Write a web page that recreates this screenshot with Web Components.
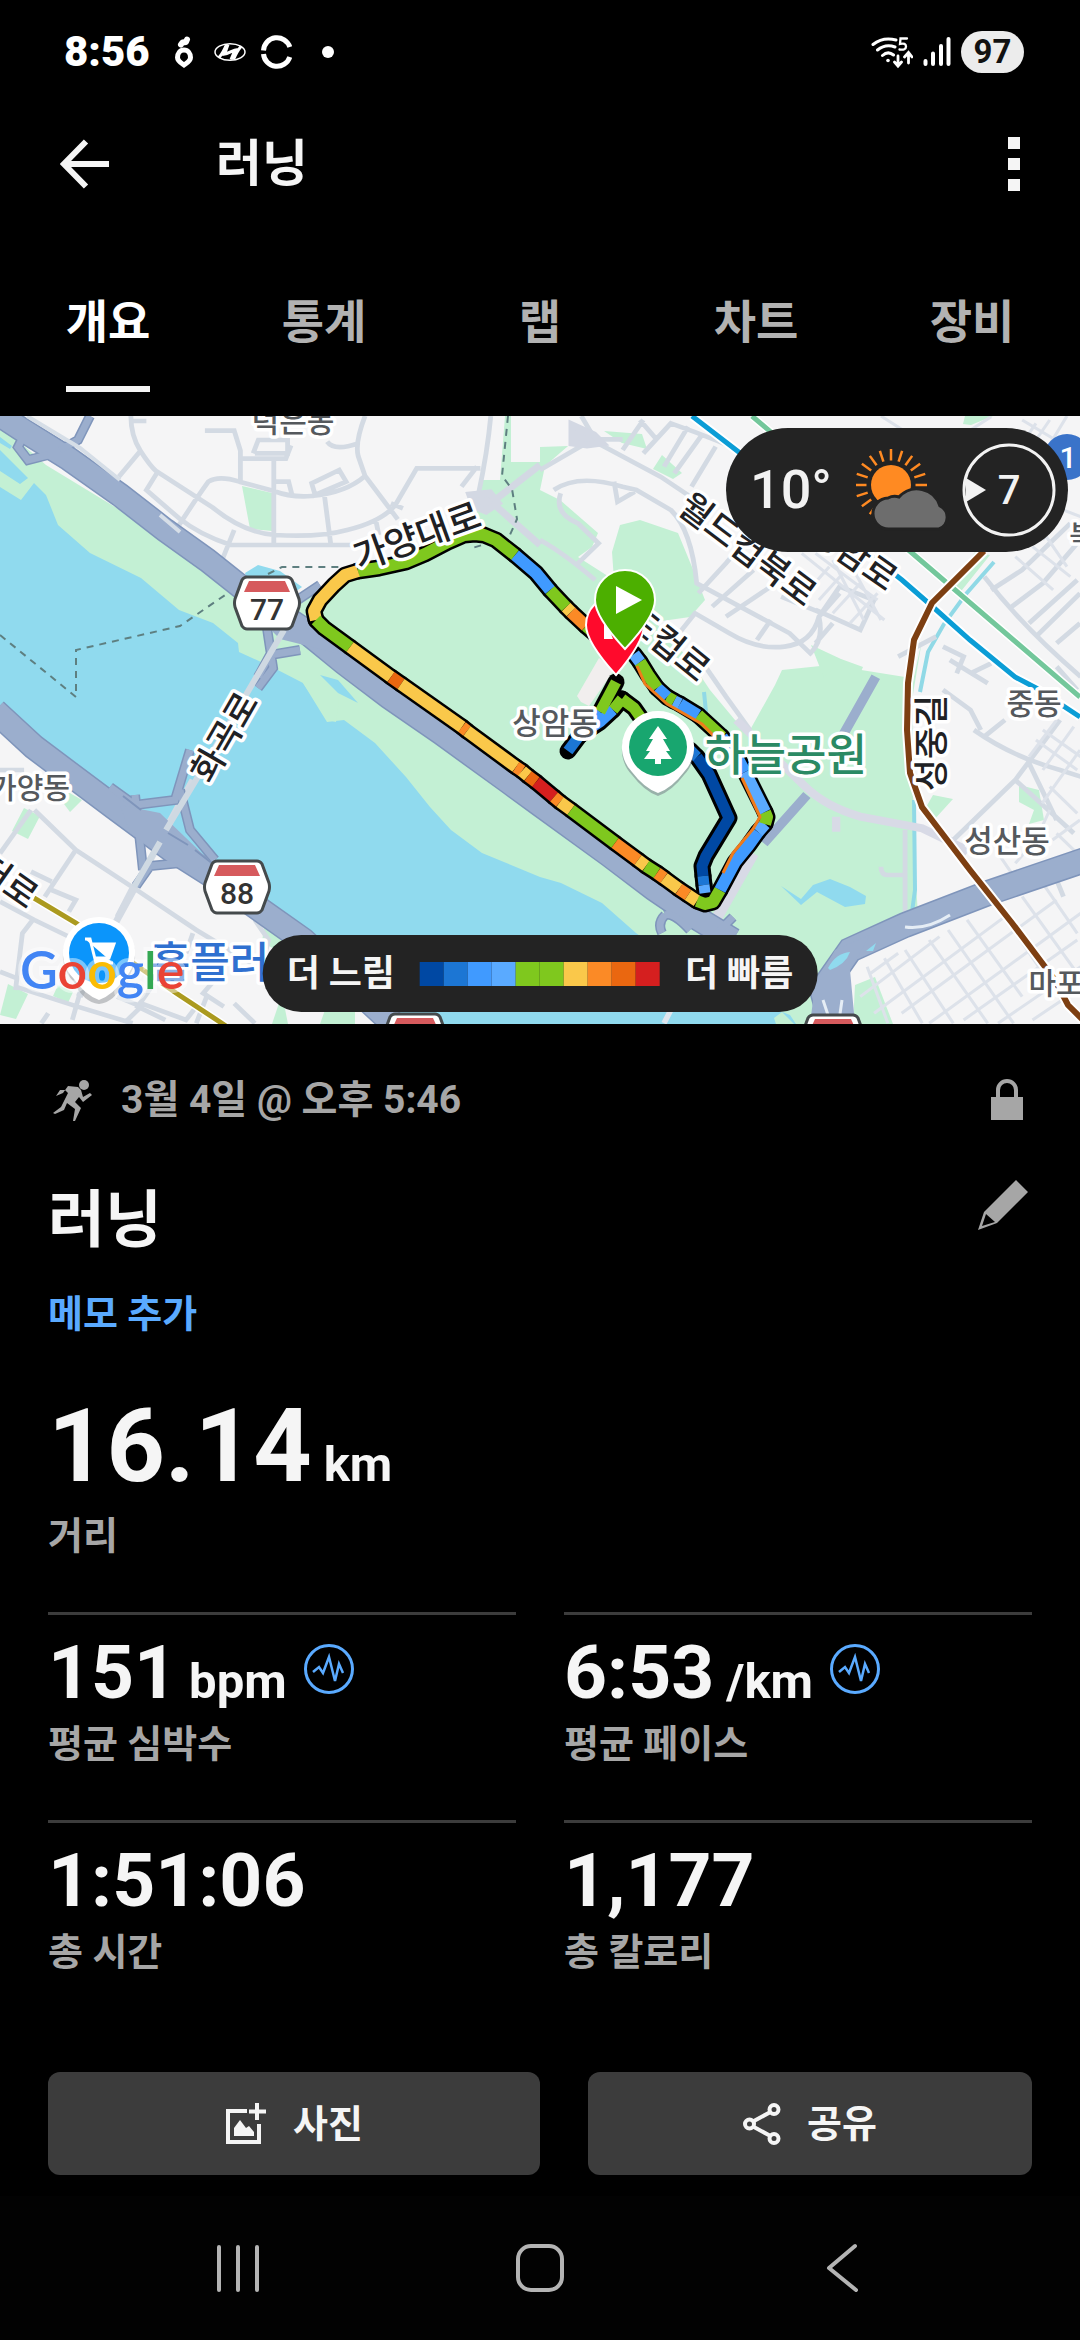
<!DOCTYPE html>
<html lang="ko">
<head>
<meta charset="utf-8">
<meta name="viewport" content="width=device-width, initial-scale=1">
<title>러닝</title>
<style>
  html { background: #000; }
  body {
    margin: 0; min-height: 100vh; display: flex; flex-direction: column;
    background: #000; color: #f5f5f5;
    font-family: Roboto, "Noto Sans CJK KR", sans-serif; font-weight: 700;
  }
</style>
</head>
<body>
<status-bar time="8:56" battery="97"></status-bar>
<app-header>러닝</app-header>
<tab-bar>
  <tab-item selected>개요</tab-item>
  <tab-item>통계</tab-item>
  <tab-item>랩</tab-item>
  <tab-item>차트</tab-item>
  <tab-item>장비</tab-item>
</tab-bar>
<route-map>
  <weather-pill temp="10°" wind="7"></weather-pill>
  <pace-legend slow="더 느림" fast="더 빠름"></pace-legend>
</route-map>
<activity-summary>
  <span slot="date">3월 4일 @ 오후 5:46</span>
  <span slot="title">러닝</span>
  <span slot="memo">메모 추가</span>
  <stat-cell large value="16.14" unit="km">거리</stat-cell>
  <stat-cell value="151" unit="bpm" zone>평균 심박수</stat-cell>
  <stat-cell value="6:53" unit="/km" zone>평균 페이스</stat-cell>
  <stat-cell value="1:51:06">총 시간</stat-cell>
  <stat-cell value="1,177">총 칼로리</stat-cell>
</activity-summary>
<action-row>
  <action-button icon="photo">사진</action-button>
  <action-button icon="share">공유</action-button>
</action-row>
<nav-bar></nav-bar>

<script>
const define = (name, render) => customElements.define(name, class extends HTMLElement {
  constructor() { super(); this.attachShadow({ mode: 'open' }); }
  connectedCallback() { this.shadowRoot.innerHTML = render(this); }
});
const reset = `:host,*{box-sizing:border-box} svg{display:block;flex:none} button{font:inherit;color:inherit;background:none;border:0;padding:0;margin:0;display:flex;align-items:center;justify-content:center;cursor:pointer}`;

define('status-bar', el => `
<style>${reset}
:host{display:flex;align-items:center;justify-content:space-between;height:104px;padding:0 56px 0 64px;color:#fff}
.side{display:flex;align-items:center}
.time{font-size:42px;font-weight:900;line-height:48px}
.left{gap:15px}.right{gap:10px}
.batt{width:63px;height:42px;border-radius:21px;background:#ececec;color:#111;font:700 33px/42px Roboto,sans-serif;text-align:center}
</style>
<div class="side left"><span class="time">${el.getAttribute('time')}</span>
<svg width="34" height="32" viewBox="-8 0 34 32" fill="none" stroke="#fff"><path d="M11 14c-4 0-6.500 3.500-6.500 7.500 0 3.500 3.500 5.500 6.500 7.500 3-2 6.500-4 6.500-7.500 0-4-2.500-7.500-6.500-7.500z" stroke-width="5"/><path d="M8 8.500l1.500-2 3.500-.5 1-2.500" stroke-width="6" stroke-linecap="round" stroke-linejoin="round"/></svg>
<svg width="32" height="20" viewBox="0 0 32 20" fill="none" stroke="#fff"><ellipse cx="16" cy="10" rx="15" ry="8.300" stroke-width="1.500"/><path d="M12.500 2.500Q9 11 5 15.500M19.500 17.500Q23 9 27 4.500M8.500 12.500C15 12.500 18 7.500 24 7.500M14 2.500L11 11M21 8l-4 9.500" stroke-width="3"/></svg>
<svg width="32" height="34" viewBox="0 0 32 34" fill="none" stroke="#fff" stroke-width="5"><path d="M2.500 15.500A13.500 13.500 0 0 1 28.800 12M2.500 19A13.500 13.500 0 0 0 28.800 22"/></svg>
<svg width="32" height="12" viewBox="0 0 32 12"><circle cx="20" cy="6" r="6" fill="#fff"/></svg></div>
<div class="side right">
<svg width="42" height="34" viewBox="0 0 42 34" fill="none" stroke="#fff" stroke-width="3" stroke-linecap="round"><path d="M2 9.500Q12 1.500 25 5M6.500 15Q14.500 8.500 24 12M11.500 20.500Q17 15.500 22.500 20"/><circle cx="17" cy="25.500" r="1.800" fill="#fff" stroke="none"/><path d="M36 3.500h-6.500l-.500 5.500q6-1.500 6 2.500t-6.500 3" stroke-width="2.300"/><path d="M27 21v9M23.500 27l3.500 4 3.500-4M37.500 28v-9M33.500 22l4-4.500 3.500 4.500" stroke-width="2.800"/></svg>
<svg width="28" height="32" viewBox="0 0 28 32" stroke="#fff" stroke-width="4" stroke-linecap="round"><path d="M2.500 25v3M10 17.500V28M18 10v18M25.500 3v25"/></svg>
<span class="batt">${el.getAttribute('battery')}</span></div>`);

define('app-header', () => `
<style>${reset}
:host{display:flex;align-items:center;height:120px;padding:0 54px 0 60px}
h1{flex:1;margin:0 0 0 106px;font-size:50px;line-height:64px}
</style>
<button aria-label="뒤로"><svg width="50" height="50" viewBox="0 0 50 50" fill="none" stroke="#f5f5f5" stroke-width="6"><path d="M49 25H5M26 2.500L4 25l22 22.500"/></svg></button>
<h1><slot></slot></h1>
<button aria-label="더보기"><svg width="24" height="54" viewBox="0 0 24 54" fill="#f5f5f5"><path d="M6 0h12v12H6zM6 21h12v12H6zM6 42h12v12H6z"/></svg></button>`);

define('tab-bar', () => `<style>:host{display:flex;height:192px}</style><slot></slot>`);
define('tab-item', el => `
<style>${reset}
:host{flex:1;display:flex;justify-content:center;align-items:flex-end;padding-bottom:24px;color:#b2b2b2}
:host([selected]){color:#fff}
button{font-size:46px;line-height:64px;padding:0 0 32px;border-bottom:6px solid transparent}
:host([selected]) button{border-color:#f5f5f5}
</style><button role="tab" aria-selected="${el.hasAttribute('selected')}"><slot></slot></button>`);

const shield = (x, y, n) => `<g transform="translate(${x} ${y})"><path d="M-20-26H20Q23-26 25-23L32-4Q33 0 32 4L25 23Q23 26 20 26H-20Q-23 26-25 23L-32 4Q-33 0-32-4L-25-23Q-23-26-20-26z" fill="#fff" stroke="#454a4c" stroke-width="3"/><path d="M-18-22H18L23-11H-23z" fill="#d65a5d"/>${n ? `<text y="17" text-anchor="middle" font-size="30" font-weight="500" fill="#333">${n}</text>` : ''}</g>`;
const label = (x, y, size, text, rot = 0, cls = 'road') => `<text class="${cls}" font-size="${size}" text-anchor="middle" transform="translate(${x} ${y}) rotate(${rot})" y="${Math.round(size * .36)}">${text}</text>`;
const G = '#7fc81e', B = '#409aff', L = '#5aaaff', D = '#0048a3', Y = '#fac84a', O = '#fb8a26', E = '#ea6710', R = '#d51f1f';
const track = [
  [G, '613,650 600,638 586,626'], [O, '586,626 571,612'], [Y, '571,612 566,607'], [G, '566,607 550,590'], [B, '550,590 536,573 515,555'],
  [G, '515,555 496,540 484,535 475,534 464,535 448,542 425,554 406,562 379,568 358,571'],
  [Y, '358,571 345,575 334,585 320,600 314,611 316,620'], [G, '316,620 324,628 350,647'],
  [Y, '350,647 391,677'], [E, '391,677 401,684'], [Y, '401,684 462,727'], [O, '462,727 467,731'], [Y, '467,731 516,767'],
  [O, '516,767 522,771'], [Y, '522,771 528,776'], [E, '528,776 536,782'], [R, '536,782 554,797'], [O, '554,797 560,802'], [Y, '560,802 571,810'],
  [G, '571,810 615,843'], [O, '615,843 638,860'], [Y, '638,860 646,866'], [G, '646,866 657,873'], [O, '657,873 664,878'], [Y, '664,878 679,889'],
  [O, '679,889 688,895'], [Y, '688,895 697,901'], [G, '697,901 705,904 713,902 720,890'], [B, '720,890 735,862 748,846 758,832'],
  [L, '758,832 765,824'], [G, '765,824 767,817 765,812'], [L, '765,812 745,772'], [B, '745,772 737,757 722,737'], [G, '722,737 698,715'],
  [B, '698,715 680,704'], [L, '680,704 674,701'], [G, '674,701 667,697'], [B, '667,697 657,688'], [G, '657,688 648,675 640,662'], [L, '640,662 634,654']
];
const inner = [[D, '697,757 709,774 729,818 706,856 702,866 703,876'], ['#1c76d4', '703,876 704,885'], [L, '704,885 705,893'], ['#1c76d4', '690,750 697,757'], [G, '655,738 634,708 622,699'], [G, '622,699 613,710'], [B, '613,710 600,722 580,735'], ['#1c76d4', '580,735 568,751'], [G, '616,682 600,712'], [B, '600,712 590,726']];
const seg = (list, w) => list.map(([c, p]) => `<polyline points="${p}" stroke="${c}" stroke-width="${w}"/>`).join('');
const shadow = list => list.map(([, p]) => `<polyline points="${p}"/>`).join('');

define('route-map', () => `
<style>${reset}
:host{display:block;position:relative;aspect-ratio:1080/608;overflow:hidden;background:#f5f5f5}
.map{width:100%;height:100%}
text{font-family:Roboto,"Noto Sans CJK KR",sans-serif;font-weight:500}
.road,.town,.poi,.shop{paint-order:stroke;stroke:#fff;stroke-width:7px;stroke-linejoin:round}
.road{fill:#202124}.town{fill:#55595d}.poi{fill:#2b8a64}.shop{fill:#2f70d0}
.google{font-family:Lato,sans-serif;font-size:52px;font-weight:600}
.hw{fill:none;stroke:#7f95bb}.hw2{fill:none;stroke:#9baecd}
.minor{fill:none;stroke:#d3dae3;stroke-width:14}.lane{fill:none;stroke:#dde2ea;stroke-width:9}
slot{display:block}
::slotted(weather-pill){position:absolute;top:12px;right:12px}
::slotted(pace-legend){position:absolute;bottom:12px;left:50%;transform:translateX(-50%)}
</style>
<svg class="map" viewBox="0 416 1080 608" preserveAspectRatio="xMidYMid slice" role="img" aria-label="경로 지도">
<rect y="416" width="1080" height="608" fill="#f5f5f6"/>
<g fill="#c3f0d4">
<path d="M0 425L46 465 120 510 165 545 241 590 300 600 334 580 406 555 475 530 480 480 500 480 505 416H511V462H540V455L568 446 545 466 540 490 560 500 598 533 592 547 578 557 614 580 612 552 620 525 640 520 678 533 692 567 705 600 690 617 655 622 690 660 710 690 735 720 750 730 775 685 782 670 830 665 905 677 912 820 918 915 850 945 826 1024H540L440 950 300 900 0 560z"/>
<path d="M604 431l38 3 5 15-25-6zM662 455l20 18-9 6-20-10zM540 447l28-1-28 20zM965 416h28l-22 9-8-1z"/>
<path d="M242 486l30 7v38l-22-2zM811 645l30 14 22 8-4 9-26-8-9 10z"/>
<path d="M933 795l20 4-20 22-8-12zM1019 785l20 5 5 30-15 4 5-14-15-8zM855 985l20-8 18 47h-40z"/>
<path d="M24 808l16 8-12 23-16-8zM68 792l14 8-12 12-6-8zM42 764l10-3 3 8zM8 984l20 10-12 25-16-4zM58 985l15 7-5 11-15-7zM265 920l26 17-8 17-21-12zM272 1024l10-30 6 30zM325 1010h30v14h-35z"/>
<path d="M975 552l15 3-32 40-8-6zM922 640l-10 60 3 220h-8l3-225z"/>
</g>
<path d="M577 696l22-38 15 12-25 36-8-4z" fill="#f1eeee"/>
<g fill="#90daee">
<path d="M0 487L21 500 34 483 46 495 58 525 90 553 141 578 179 610 213 623 238 643 239 652 272 667 303 683 327 722 344 720 375 743 406 777 430 807 451 830 482 853 540 877 561 883 602 903 636 933 700 980 790 1015 796 1024H400L303 933 0 715z"/>
<path d="M0 450L28 478 20 484 0 471zM0 437l12 9-2 3-10-6z"/>
<path d="M245 573l13-8 22 6 22 16-10 7-20-8-22 4zM781 886l20 13 12-14 17-6 20 8 16 9-1 8-20 3-28-15-16 13z"/>
<path d="M320 675l18 5 20 23-20-10z"/>
</g>
<g fill="#c3f0d4"><path d="M303 683l18 1 18 16-3 22-8-2zM774 1018l8-6 12 12h-18z"/></g>
<path d="M994 562l-28 32-22 30-16 28-8 40M914 800l1 90-3 22M704 692l2 20-6 14" fill="none" stroke="#90d9e6" stroke-width="4"/>

<g transform="translate(0 410) scale(.3444 .3333)" class="minor">
<path d="M380 18q0 60 28 105t45 60l165 110q90 75 180 82 130 8 210-15 100-25 140-75l62-110h185M345 200l65-80M455 190l-30 50 95 85q60 50 150 80h360M520 345q50-80 85-130 30-20 90 0l100 28q50 20 110 15 100-10 155-60M595 62h85l18 60v90M698 146h132l15-40M735 130l15-40h85v40h-95M795 148v260M800 215h38l10 40M940 240l20 160M1060 18q-30 80-20 120l20 60 95 130M950 95q20 30 90 5M905 220l80-40 20 35-90 40zM680 360l-35 90M1135 280l35 15M1090 325l10 50M1425 18q-10 110-35 230M1340 230l45-60M385 33h40"/>
</g>
<g transform="translate(540 410) scale(.3444 .3333)" class="minor">
<path d="M0 180l150-90 200 110 130 90M120 18l40 70 80 0M300 130l80-90q140 50 260 110M360 170l70-120M390 190l80-115M440 230l70-120M240 120l60-90M290 30l50 60M40 240q70-50 200-10l40 10 100 60q60 60 75 220l270 150 60 60q40-40 25-110l60-90 100 40-40 90-130-60M60 250q-20 60 50 90l60 60-60 60M215 215l10 60 50-30M0 390q70 40 160 120M460 550l80-90 50-60M500 590l120-110M540 620l130-90M380 700l70-90 100 60q80 50 160 40t100-90l60-70M630 690l40-60M480 770l60 90 70 100M700 560l120 50M850 640l-50 60M1040 740l110-60M1170 710l60 30-20 50M1190 750l110 70M1250 790l60-30M1440 680l128-130M1500 700l68-60M1290 500q110 150 280 300M1310 540l90-60 140-140M1370 590l90-70 100-120M1240 480l60-70M1420 640l140-130M1170 840l80 60 30 60M1560 840l-60-70"/>
</g>
<g transform="translate(540 410) scale(.3444 .3333)" class="lane">
<path d="M760 430l240 200M800 430l180 140M840 470l-60 70M880 490l-70 80M930 520l-80 90M980 550l-80 90M850 450l90 180M900 460l90 170M1440 40l-80 120M1480 30l-80 120M1530 18l-70 120M1400 30l130 80M1380 440l110 100M1430 410l110 90M1250 60l60-40M990 18l60 40M1460 390l60-90 50 20M1530 470l-60-90"/>
</g>
<g transform="translate(0 720) scale(.3444 .3333)" class="minor">
<path d="M100 270l120 120 170 115 180 125 200 125M0 400l90-130M130 530l90-140M0 545l100 55 120 60M95 600l-30 40-20 170M0 755l50 20M45 800l180 60 160 50M210 900l30-110M120 910l20-30M385 500l-45 90M340 830l70 30-50 50M410 850l130 50 30-40M560 640l-20 60M640 760l-50 60 60 40M600 830l-30 80M680 850l60 60M0 150h70M90 455l60 30M150 510l70 30-20 35M740 600l40 60-20 80M440 800l-40 60 80 40"/>
<path d="M560 180L480 330M465 365L340 600l-110 230" stroke-width="20"/>
</g>
<g transform="translate(540 720) scale(.3444 .3333)" class="minor">
<path d="M1260 30q110 80 250 120l60 20M1290 50l60-50M1200 360l180-180 130-180M1380 180l170 160M1420 130l80 170M1060 590V330M990 440q0 25 20 25h50M1500 480l20 50"/>
<path d="M570 0l200 200q60 60 160 90l180 35 120 60M860 290v45M1160 340l80 60" stroke-width="24" stroke="#d8dae6"/>
<path d="M510 600l110-200" stroke-width="32" stroke="#d8dae6"/>
<path d="M650 370l125-145M850 100l125-230" stroke-width="28" stroke="#9baecd"/>
<path d="M360 910l40-80M830 870l60-110" stroke-width="16" stroke="#dfe6ee"/>
</g>
<g transform="translate(540 720) scale(.3444 .3333)" class="lane">
<path d="M950 740l60 170M1000 715l110 195M1060 690l140 220M1130 660l170 250M1185 630l190 280M1240 600l160 230M1330 560l170 260M1400 530l160 230M1460 490l100 150M930 830l230-180M970 880l380-290M1050 880l450-340M1130 910l440-330M1230 900l330-240M1330 910l240-170M1430 900l130-90M960 760l80-60"/>
<path d="M1440 60l120 90M1460 30l110 80M1480 200l80 80M1500 0l-80 110M1550 20l-90 130M1568 90l-110 160M1330 400l40 60M1380 430l60-70M1480 270l-40 90M1568 300l-80 60M1500 340l60 60"/>
</g>

<g class="hw"><path d="M-5 412L21 429 69 459 120 495 165 530 207 560 241 587 300 627 344 663 389 697 441 733 510 783 540 805 609 855 654 889 695 917 733 940" stroke-width="25"/><path d="M-5 711L34 747 114 807 172 850 213 876 262 911 303 940 386 1017 400 1030M1085 860L988 893 905 925 850 950 822 990 833 1030" stroke-width="26"/><path d="M90 416L78 440 60 450M48 455l-20 5-10-13 5-10 20 0M320 585l-30 20M267 628l6 40-15 20M300 650l-30 5-12 22M190 750l-15 50-40 5-25-18M180 790l10 40 25 30M135 795l8 75M190 862l-40 4-14 20M713 937l20-20M665 915q-8 8-3 18M665 915q8-3 25 15" stroke-width="10"/></g>
<g class="hw2"><path d="M-5 412L21 429 69 459 120 495 165 530 207 560 241 587 300 627 344 663 389 697 441 733 510 783 540 805 609 855 654 889 695 917 733 940" stroke-width="22"/><path d="M-5 711L34 747 114 807 172 850 213 876 262 911 303 940 386 1017 400 1030M1085 860L988 893 905 925 850 950 822 990 833 1030" stroke-width="23"/><path d="M90 416L78 440 60 450M48 455l-20 5-10-13 5-10 20 0M320 585l-30 20M267 628l6 40-15 20M300 650l-30 5-12 22M190 750l-15 50-40 5-25-18M180 790l10 40 25 30M135 795l8 75M190 862l-40 4-14 20M713 937l20-20M665 915q-8 8-3 18M665 915q8-3 25 15" stroke-width="7"/></g>
<path d="M120 805l40 8 50 48-20 12-60-40zM240 580l70 40 30 34-60-15-30-30zM815 985l20-35 35-15-20 35 5 54h-45z" fill="#9baecd"/>
<path d="M123 796l18 14M168 833l20 12M195 850l18 14" stroke="#7f95bb" stroke-width="2"/>
<path d="M828 968q8-15 22-16-4 12-20 18zM866 951l10-8-3 8z" fill="#90daee"/>
<path d="M823 1000l5 15M842 1000l-2 14M905 927q22 3 45-12" stroke="#e5edf5" stroke-width="3" fill="none"/>
<path d="M27 416L80 448 120 480M160 515l20 17" stroke="#d6dee7" stroke-width="4" fill="none"/>
<path d="M284 630L196 780 166 830M160 842l-26 45" stroke="#cfd9e2" stroke-width="6"/>
<path d="M470 495l20-2 8 10-12 8-12-5zM495 500l45-35M497 507l43 38M572 425l22 10 8 8-15 2-15-2z" fill="#d3d8e3" stroke="#d3d8e3" stroke-width="7"/>
<path d="M0 635l76 62V650L180 626 228 593M268 574l14-7h60M508 416l-6 60 10 13 5 30-8 18-40 12" fill="none" stroke="#5e7f80" stroke-width="2" stroke-dasharray="7 6"/>

<g fill="none">
<path d="M692 416L740 453 902 580 933 607 970 640 1015 677 1036 688 1080 717" stroke="#fff" stroke-width="9"/><path d="M692 416L740 453 902 580 933 607 970 640 1015 677 1036 688 1080 717" stroke="#0b9dd6" stroke-width="5"/>
<path d="M752 416L912 553 1080 697" stroke="#fff" stroke-width="8"/><path d="M752 416L912 553 1080 697" stroke="#73c79b" stroke-width="5"/>
<path d="M984 551L932 603 914 640 908 683 907 730 910 773 922 807 970 870 1012 923 1055 980 1068 1005 1085 1022" stroke="#fff" stroke-width="10"/><path d="M984 551L932 603 914 640 908 683 907 730 910 773 922 807 970 870 1012 923 1055 980 1068 1005 1085 1022" stroke="#7d3f12" stroke-width="6"/>
<path d="M-5 866L34 898 76 923 176 993 226 1026" stroke="#fff" stroke-width="8"/><path d="M34 898L76 923 176 993 226 1026" stroke="#ab9a1f" stroke-width="5"/>
</g>

<g fill="none" stroke="#000" stroke-width="17" stroke-linejoin="round" stroke-linecap="round">${shadow(inner)}${shadow(track)}</g>
<g fill="none" stroke-linejoin="round">${seg(inner, 11)}${seg(track, 12)}
<path d="M742 778l18 39-7 12-20 24-10 20M728 750l-26-26-35-20-22-20-8-18" stroke="#ef7b1c" stroke-width="3"/></g>

${label(293, 421, 30, '덕은동', 0, 'town')}
${label(417, 536, 36, '가양대로', -20)}
${label(224, 737, 35, '화곡로', -60)}
${label(30, 789, 29, '가양동', 0, 'town')}
${label(8, 881, 35, '터로', 35)}
${label(555, 723, 31, '상암동', 0, 'town')}
${label(1034, 703, 30, '중동', 0, 'town')}
${label(1007, 841, 31, '성산동', 0, 'town')}
${label(1056, 983, 30, '마포', 0, 'town')}
${label(1082, 536, 28, '북', 0, 'town')}
${label(931, 743, 35, '성중길', -90)}
${label(748, 549, 35, '월드컵북로', 37)}
${label(668, 643, 35, '드컵로', 39)}
${label(854, 554, 35, '성암로', 35)}

<g transform="translate(99 953)"><path d="M0-36a36 36 0 0 1 25 62Q16 46 0 48-16 46-25 26A36 36 0 0 1 0-36z" fill="#8d9196" opacity=".5" transform="translate(0 3)"/><path d="M0-36a36 36 0 0 1 25 62Q14 42 0 47-14 42-25 26A36 36 0 0 1 0-36z" fill="#fff"/><circle r="30" fill="#0b95fb"/><path d="M-14-14h5l6 24h17M-7-9H15L10 5H-4" fill="#fff" stroke="#fff" stroke-width="3"/></g>
${label(210, 963, 43, '홈플러', 0, 'shop')}
<text class="google" x="20" y="989" fill="#4285f4" stroke="#fff" stroke-opacity=".45" stroke-width="8" paint-order="stroke">G<tspan fill="#ea4335">o</tspan><tspan fill="#fbbc05">o</tspan>g<tspan fill="#34a853">l</tspan><tspan fill="#ea4335">e</tspan></text>
<g transform="translate(658 747)"><path d="M0-36a36 36 0 0 1 26 61Q14 41 0 46-14 41-26 25A36 36 0 0 1 0-36z" fill="#667" opacity=".45" transform="translate(0 3)"/><path d="M0-36a36 36 0 0 1 26 61Q14 41 0 46-14 41-26 25A36 36 0 0 1 0-36z" fill="#fff"/><circle r="29" fill="#18a66f"/><path d="M0-21L9-8H5L12 4H8l6 8H3v5h-6v-5h-11l6-8h-4L-5-8h-4z" fill="#fff"/></g>
${label(786, 755, 44, '하늘공원', 0, 'poi')}
${shield(267, 603, 77)}${shield(237, 887, 88)}${shield(415, 1040, '')}${shield(833, 1041, '')}
<circle cx="1067" cy="457" r="23" fill="#3a73c9"/><text x="1068" y="468" font-size="30" fill="#fff" text-anchor="middle">1</text>
<path d="M616 675Q586 642 586 625a29 29 0 0 1 58 0q0 17-28 50z" fill="#ff0a2c" stroke="#fff" stroke-width="2"/><path d="M604 620v19h9l-9-24z" fill="#fff"/>
<path d="M625 649Q595 617 595 600a30 30 0 0 1 60 0q0 17-30 49z" fill="#4caf00" stroke="#fff" stroke-width="2"/><path d="M616 586v28l26-14z" fill="#fff"/>
</svg>
<slot></slot>`);

define('weather-pill', el => `
<style>${reset}
:host{display:flex;align-items:center;gap:10px;height:124px;padding:0 12px 0 24px;border-radius:62px;background:#232323;color:#f2f2f2}
.temp{font-size:54px;font-weight:500;line-height:64px;margin-right:14px}
.wind{display:grid;place-items:center;font-size:40px;font-weight:500}
.wind>*{grid-area:1/1}
</style>
<span class="temp">${el.getAttribute('temp')}</span>
<svg width="96" height="84" viewBox="0 0 96 84"><g stroke="#ff8a22" stroke-width="2.500">${Array.from({ length: 17 }, (_, i) => `<path d="M35 12.500V1" transform="rotate(${i * 18 - 144} 35 37)"/>`).join('')}</g><circle cx="35" cy="37" r="20" fill="#ff8a22"/><path d="M33 81a15 15 0 0 1-1-31 15 15 0 0 1 11-1 24 24 0 0 1 41 9 12.500 12.500 0 0 1-1 23z" fill="#6d6d6d" stroke="#232323" stroke-width="3"/></svg>
<div class="wind"><svg width="94" height="94" viewBox="0 0 94 94"><circle cx="47" cy="47" r="45" fill="none" stroke="#f2f2f2" stroke-width="3"/><path d="M4 35L24 47 4 59z" fill="#f2f2f2"/></svg><span>${el.getAttribute('wind')}</span></div>`);

define('pace-legend', el => `
<style>${reset}
:host{display:flex;align-items:center;justify-content:center;gap:25px;height:77px;padding:0 24px;border-radius:39px;background:#232323;color:#f5f5f5;font-size:36px;line-height:48px;white-space:nowrap}
.bar{display:flex}.bar i{width:24px;height:24px}
</style><span>${el.getAttribute('slow')}</span><div class="bar">${['#0048a3', '#1c76d4', '#409aff', '#5aaaff', G, G, Y, O, E, R].map(c => `<i style="background:${c}"></i>`).join('')}</div><span>${el.getAttribute('fast')}</span>`);

define('activity-summary', () => `
<style>${reset}
:host{display:block;padding:0 48px}
header{display:flex;align-items:center;height:152px;gap:24px;color:#a6a6a6;font-size:39px;line-height:56px}
header slot{display:block;flex:1}
.title{display:flex;justify-content:space-between;align-items:flex-start}
h2{margin:0;font-size:62px;line-height:90px}
a{display:block;color:#5aaaff;font-size:38px;line-height:56px;margin:20px 0 42px;text-decoration:none}
.stats{display:grid;grid-template-columns:1fr 1fr;column-gap:48px}
.edit{padding:4px;height:58px}
</style>
<header><svg width="49" height="42" viewBox="0 0 49 42" fill="#a6a6a6"><circle cx="36" cy="6" r="5"/><path d="M15 14l5-7 10 1 3 3 2 7 7-4 2 2-9 7-4-5-4 5 6 6-6 13h-2l2-12-8-6-3 7-9 4-2-1 8-6 7-14-3-3-5 0-4 6z"/></svg><slot name="date"></slot>
<svg width="50" height="42" viewBox="0 0 50 42"><path d="M16 18V11a9 9 0 0 1 18 0v7" fill="none" stroke="#a6a6a6" stroke-width="4"/><path d="M9 18h32v23H9z" fill="#a6a6a6"/></svg></header>
<div class="title"><h2><slot name="title"></slot></h2><button class="edit" aria-label="편집"><svg width="50" height="50" viewBox="0 0 50 50" fill="#a6a6a6"><path fill-rule="evenodd" d="M38 0l12 12-31 31L0 50l6-18zM8 34L4 46l13-4z"/></svg></button></div>
<a href="#memo"><slot name="memo"></slot></a>
<div class="stats"><slot></slot></div>`);

define('stat-cell', el => `
<style>${reset}
:host{display:block;border-top:3px solid #3c3c3c;padding-top:13px;height:208px}
:host([large]){grid-column:1/-1;border:0;padding:0;height:228px}
.v{display:flex;align-items:baseline;gap:12px;height:88px;font-size:75px;line-height:88px}
:host([large]) .v{height:124px;font-size:102px;line-height:124px}
.u{font-size:49px;line-height:56px}
.v svg{align-self:flex-start;margin:16px 0 0 5px}
.l{color:#a6a6a6;font-size:38px;line-height:56px}
</style>
<div class="v"><span>${el.getAttribute('value')}</span>${el.hasAttribute('unit') ? `<span class="u">${el.getAttribute('unit')}</span>` : ''}${el.hasAttribute('zone') ? `<svg width="50" height="50" viewBox="0 0 50 50" fill="none" stroke="#5aaaff"><circle cx="25" cy="25" r="23.500" stroke-width="3"/><path d="M9 28l6-5 4 6 6-16 6 24 4-17 4 9" stroke-width="2.500"/></svg>` : ''}</div>
<div class="l"><slot></slot></div>`);

define('action-row', () => `<style>:host{display:flex;gap:48px;padding:44px 48px 20px}::slotted(:first-child){flex:41 1 0}::slotted(:last-child){flex:37 1 0}</style><slot></slot>`);
const icons = {
  photo: '<svg width="42" height="42" viewBox="0 0 42 42" fill="none" stroke="#f5f5f5" stroke-width="4"><path d="M22 8H3v31h31V21M32 0v17M24 8.500h17"/><path d="M9 33v-8l6-8 6 8 3-2 5 6v4z" fill="#f5f5f5" stroke="none"/></svg>',
  share: '<svg width="38" height="42" viewBox="0 0 38 42" fill="none" stroke="#f5f5f5" stroke-width="4"><circle cx="6.500" cy="21" r="4.500"/><circle cx="31" cy="6.500" r="4.500"/><circle cx="31" cy="35.500" r="4.500"/><path d="M10 18.500L27.500 9M10 23.500L27.500 33"/></svg>'
};
define('action-button', el => `
<style>${reset}
:host{display:block}
button{width:100%;height:103px;gap:26px;border-radius:12px;background:#3c3c3c;color:#f5f5f5;font-size:38px;line-height:56px}
</style><button>${icons[el.getAttribute('icon')]}<span><slot></slot></span></button>`);

define('nav-bar', () => `
<style>${reset}
:host{display:flex;justify-content:center;align-items:center;gap:254px;height:144px;margin-top:auto;background:#020202}
</style>
<button aria-label="최근 앱"><svg width="48" height="50" viewBox="0 0 48 50" stroke="#b4b4b4" stroke-width="4" stroke-linecap="round"><path d="M5 4v43M24 4v43M43 4v43"/></svg></button>
<button aria-label="홈"><svg width="48" height="50" viewBox="0 0 48 50" fill="none" stroke="#b4b4b4" stroke-width="4"><rect x="2" y="3" width="44" height="44" rx="13"/></svg></button>
<button aria-label="뒤로"><svg width="48" height="50" viewBox="0 0 48 50" fill="none" stroke="#b4b4b4" stroke-width="4" stroke-linecap="round" stroke-linejoin="round"><path d="M37 3L11 25l27 22"/></svg></button>`);
</script>
</body>
</html>
